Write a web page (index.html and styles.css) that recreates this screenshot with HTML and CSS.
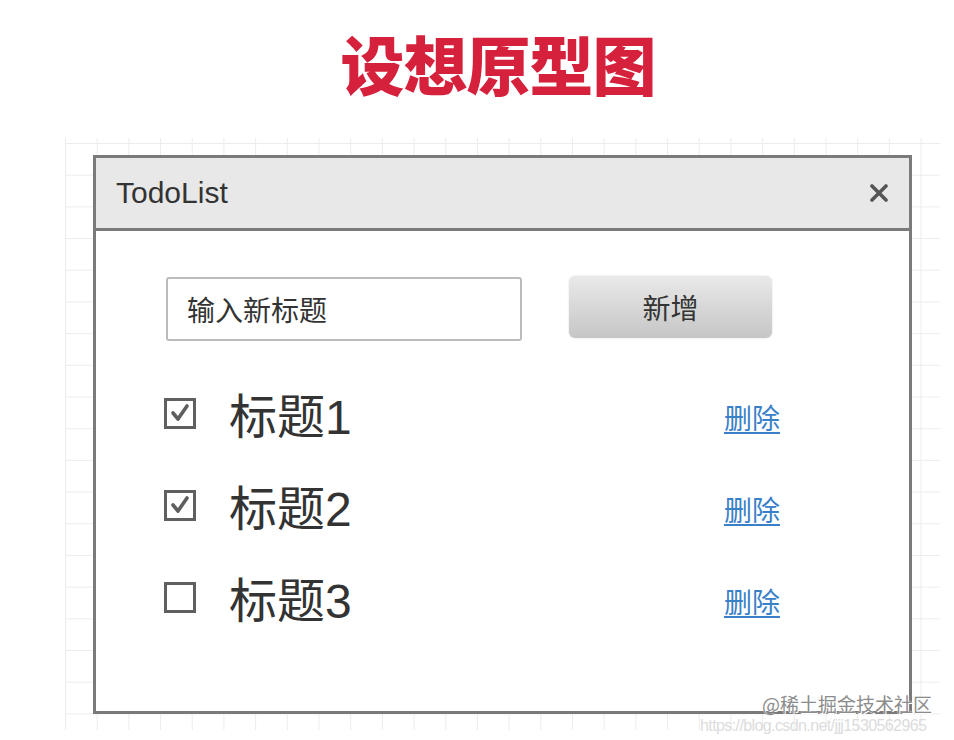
FILE: index.html
```html
<!DOCTYPE html>
<html lang="zh-CN">
<head>
<meta charset="utf-8">
<title>设想原型图</title>
<link rel="stylesheet" href="styles.css">
</head>
<body>
<div class="page">
  <h1 class="heading">设想原型图</h1>
  <div class="canvas">
    <div class="window">
      <div class="titlebar">
        <span class="app-name">TodoList</span>
        <svg class="close" width="18" height="18" viewBox="0 0 18 18"><path d="M2 2 L16 16 M16 2 L2 16" stroke="#555" stroke-width="3.6" stroke-linecap="round"/></svg>
      </div>
      <div class="content">
        <div class="form">
          <div class="input">输入新标题</div>
          <button class="add">新增</button>
        </div>
        <ul class="list">
          <li class="item">
            <span class="box"><svg width="22" height="20" viewBox="0 0 22 20"><path d="M4 10 L9 16 L18 3" fill="none" stroke="#5e5e5e" stroke-width="3.6" stroke-linecap="round" stroke-linejoin="round"/></svg></span>
            <span class="label">标题1</span>
            <a class="del" href="#">删除</a>
          </li>
          <li class="item">
            <span class="box"><svg width="22" height="20" viewBox="0 0 22 20"><path d="M4 10 L9 16 L18 3" fill="none" stroke="#5e5e5e" stroke-width="3.6" stroke-linecap="round" stroke-linejoin="round"/></svg></span>
            <span class="label">标题2</span>
            <a class="del" href="#">删除</a>
          </li>
          <li class="item">
            <span class="box"></span>
            <span class="label">标题3</span>
            <a class="del" href="#">删除</a>
          </li>
        </ul>
      </div>
    </div>
  </div>
  <div class="mark-url">https://blog.csdn.net/jjj1530562965</div>
  <div class="mark">@稀土掘金技术社区</div>
</div>
</body>
</html>
```

FILE: styles.css
```css
html, body {
  margin: 0;
  padding: 0;
  background: #ffffff;
}

.page {
  position: relative;
  width: 954px;
  height: 740px;
  overflow: hidden;
  font-family: "Liberation Sans", "Noto Sans CJK SC", sans-serif;
  color: #333333;
}

.heading {
  margin: 0;
  padding: 30px 0 0 42px;
  height: 67px;
  line-height: 64px;
  text-align: center;
  font-family: "Noto Sans CJK SC", sans-serif;
  font-size: 64px;
  font-weight: 900;
  color: #d6213d;
  letter-spacing: -1px;
}

.canvas {
  box-sizing: border-box;
  margin: 41px 0 0 65px;
  width: 875px;
  height: 592px;
  padding: 17px 0 0 28px;
  background-image:
    linear-gradient(to right, #ececec 1px, transparent 1px),
    linear-gradient(to bottom, #ececec 1px, transparent 1px);
  background-size: 31.7px 31.7px;
  background-position: 0 5px;
}

.window {
  box-sizing: border-box;
  width: 819px;
  height: 559px;
  border: 3px solid #7a7a7a;
  background: #ffffff;
}

.titlebar {
  display: flex;
  align-items: center;
  justify-content: space-between;
  height: 70px;
  padding: 0 21px 0 20px;
  background: #e8e8e8;
  border-bottom: 3px solid #7a7a7a;
}

.app-name {
  font-size: 30px;
  color: #333333;
}

.close {
  display: block;
}

.content {
  padding: 46px 0 0 70px;
}

.form {
  display: flex;
  align-items: flex-start;
  gap: 47px;
}

.input {
  box-sizing: border-box;
  width: 356px;
  height: 64px;
  border: 2px solid #bcbcbc;
  border-radius: 3px;
  padding-left: 19px;
  display: flex;
  align-items: center;
  font-family: "Noto Sans CJK SC", sans-serif;
  font-size: 28px;
  color: #333333;
}

.add {
  box-sizing: border-box;
  width: 203px;
  height: 62px;
  margin-top: -1px;
  border: none;
  border-radius: 6px;
  background: linear-gradient(to bottom, #e9e9e9, #c6c6c6);
  box-shadow: 0 0 2px rgba(0, 0, 0, 0.15);
  font-family: "Noto Sans CJK SC", sans-serif;
  font-size: 28px;
  color: #333333;
  padding: 0;
}

.list {
  list-style: none;
  margin: 26px 0 0 -2px;
  padding: 0;
  width: 616px;
}

.item {
  display: flex;
  align-items: center;
  height: 92px;
}

.box {
  box-sizing: border-box;
  width: 32px;
  height: 31px;
  border: 3px solid #606060;
  margin-right: 33px;
  display: flex;
  align-items: center;
  justify-content: center;
  flex: none;
}

.box svg {
  display: block;
}

.label {
  flex: 1;
  font-family: "Liberation Sans", "Noto Sans CJK SC", sans-serif;
  font-size: 48px;
  color: #333333;
}

.del {
  font-family: "Noto Sans CJK SC", sans-serif;
  font-size: 28px;
  color: #3a80c8;
  text-decoration: underline;
  text-underline-offset: 3px;
  margin-top: 8px;
}

.mark {
  position: absolute;
  right: 22px;
  top: 692px;
  font-family: "Noto Sans CJK SC", sans-serif;
  font-size: 19px;
  line-height: 24px;
  color: #8c8c8c;
  text-shadow: 0 0 1px #ffffff, 1px 1px 0 #ffffff;
}

.mark-url {
  position: absolute;
  left: 700px;
  top: 716px;
  font-size: 16px;
  line-height: 20px;
  color: #dcdcdc;
  letter-spacing: -0.6px;
}
```
